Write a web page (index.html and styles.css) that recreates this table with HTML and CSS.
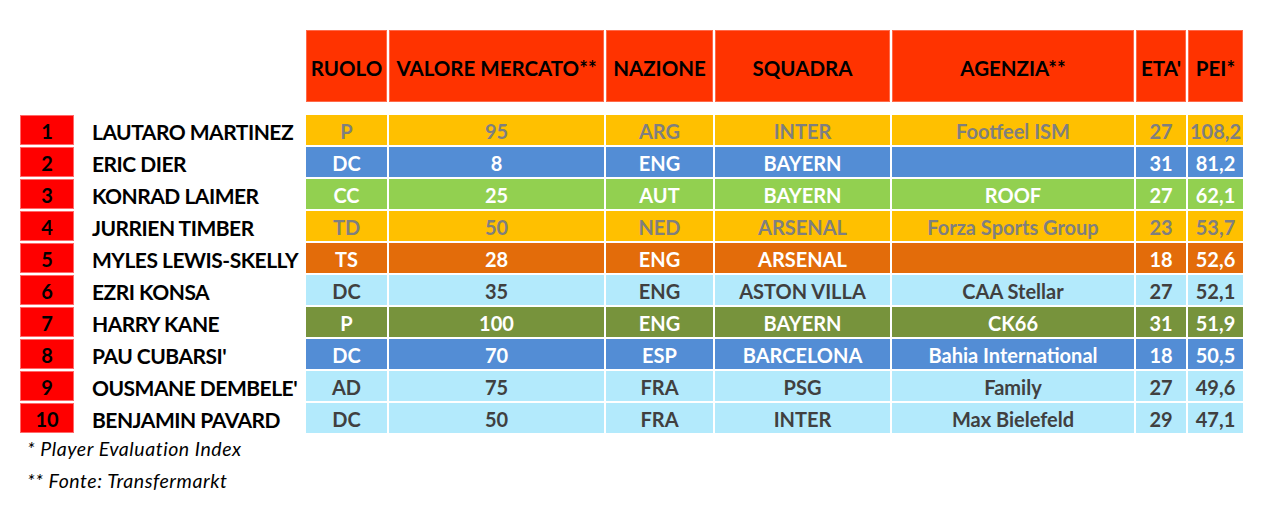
FILE: index.html
```html
<!DOCTYPE html>
<html lang="it">
<head>
<meta charset="utf-8">
<title>Classifica PEI</title>
<link rel="stylesheet" href="styles.css">
</head>
<body>
<div class="sheet">
  <div class="table">
    <div class="row head">
      <div></div><div></div>
      <div class="h">RUOLO</div>
      <div class="h">VALORE MERCATO**</div>
      <div class="h">NAZIONE</div>
      <div class="h">SQUADRA</div>
      <div class="h">AGENZIA**</div>
      <div class="h">ETA'</div>
      <div class="h">PEI*</div>
    </div>
    <div class="row yellow">
      <div class="rank">1</div><div class="name">LAUTARO MARTINEZ</div>
      <div class="c">P</div><div class="c">95</div><div class="c">ARG</div><div class="c">INTER</div><div class="c">Footfeel ISM</div><div class="c">27</div><div class="c">108,2</div>
    </div>
    <div class="row blue">
      <div class="rank">2</div><div class="name">ERIC DIER</div>
      <div class="c">DC</div><div class="c">8</div><div class="c">ENG</div><div class="c">BAYERN</div><div class="c"></div><div class="c">31</div><div class="c">81,2</div>
    </div>
    <div class="row green">
      <div class="rank">3</div><div class="name">KONRAD LAIMER</div>
      <div class="c">CC</div><div class="c">25</div><div class="c">AUT</div><div class="c">BAYERN</div><div class="c">ROOF</div><div class="c">27</div><div class="c">62,1</div>
    </div>
    <div class="row yellow">
      <div class="rank">4</div><div class="name">JURRIEN TIMBER</div>
      <div class="c">TD</div><div class="c">50</div><div class="c">NED</div><div class="c">ARSENAL</div><div class="c">Forza Sports Group</div><div class="c">23</div><div class="c">53,7</div>
    </div>
    <div class="row orange">
      <div class="rank">5</div><div class="name">MYLES LEWIS-SKELLY</div>
      <div class="c">TS</div><div class="c">28</div><div class="c">ENG</div><div class="c">ARSENAL</div><div class="c"></div><div class="c">18</div><div class="c">52,6</div>
    </div>
    <div class="row light">
      <div class="rank">6</div><div class="name">EZRI KONSA</div>
      <div class="c">DC</div><div class="c">35</div><div class="c">ENG</div><div class="c">ASTON VILLA</div><div class="c">CAA Stellar</div><div class="c">27</div><div class="c">52,1</div>
    </div>
    <div class="row olive">
      <div class="rank">7</div><div class="name">HARRY KANE</div>
      <div class="c">P</div><div class="c">100</div><div class="c">ENG</div><div class="c">BAYERN</div><div class="c">CK66</div><div class="c">31</div><div class="c">51,9</div>
    </div>
    <div class="row blue">
      <div class="rank">8</div><div class="name">PAU CUBARSI'</div>
      <div class="c">DC</div><div class="c">70</div><div class="c">ESP</div><div class="c">BARCELONA</div><div class="c">Bahia International</div><div class="c">18</div><div class="c">50,5</div>
    </div>
    <div class="row light">
      <div class="rank">9</div><div class="name">OUSMANE DEMBELE'</div>
      <div class="c">AD</div><div class="c">75</div><div class="c">FRA</div><div class="c">PSG</div><div class="c">Family</div><div class="c">27</div><div class="c">49,6</div>
    </div>
    <div class="row light">
      <div class="rank">10</div><div class="name">BENJAMIN PAVARD</div>
      <div class="c">DC</div><div class="c">50</div><div class="c">FRA</div><div class="c">INTER</div><div class="c">Max Bielefeld</div><div class="c">29</div><div class="c">47,1</div>
    </div>
  </div>
  <div class="notes">
    <p>* Player Evaluation Index</p>
    <p>** Fonte: Transfermarkt</p>
  </div>
</div>
</body>
</html>
```

FILE: styles.css
```css
html, body {
  margin: 0;
  padding: 0;
  background: #ffffff;
}

body {
  font-family: Lato, "Open Sans", "Liberation Sans", sans-serif;
  color: #000000;
}

.sheet {
  padding: 30px 0 0 20px;
}

.table {
  display: flex;
  flex-direction: column;
  gap: 2px;
}

.row {
  display: grid;
  grid-template-columns: 54px 228px 81px 215px 107px 175px 242px 50px 55px;
  column-gap: 2px;
  height: 30px;
}

.row.head {
  height: 72px;
  margin-bottom: 11px;
}

.h {
  background: #ff3300;
  display: flex;
  align-items: center;
  justify-content: center;
  padding-top: 4px;
  box-sizing: border-box;
  font-weight: 700;
  font-size: 20.5px;
  white-space: nowrap;
  color: #000000;
  box-shadow: inset 0 0 0 1px #ff6a4a;
}

.rank {
  background: #ff0000;
  display: flex;
  align-items: center;
  justify-content: center;
  padding-top: 2px;
  box-sizing: border-box;
  font-weight: 700;
  font-size: 20px;
  box-shadow: inset 0 0 0 1px #ff6a6a;
}

.name {
  display: flex;
  align-items: center;
  padding: 2px 0 0 16px;
  box-sizing: border-box;
  font-weight: 700;
  font-size: 21px;
  letter-spacing: -0.5px;
  white-space: nowrap;
}

.c {
  display: flex;
  align-items: center;
  justify-content: center;
  padding-top: 2px;
  box-sizing: border-box;
  font-weight: 700;
  font-size: 20px;
  white-space: nowrap;
}

.yellow .c { background: #ffc000; color: #7f7f7f; }
.blue .c { background: #538dd5; color: #ffffff; }
.green .c { background: #92d050; color: #ffffff; }
.orange .c { background: #e36c0a; color: #ffffff; }
.light .c { background: #b3eafc; color: #404040; }
.olive .c { background: #77933c; color: #ffffff; }

.notes {
  padding-left: 7px;
}

.notes p {
  margin: 0;
  line-height: 32px;
  font-style: italic;
  font-size: 19.5px;
  letter-spacing: 0.55px;
  color: #000000;
}
```
